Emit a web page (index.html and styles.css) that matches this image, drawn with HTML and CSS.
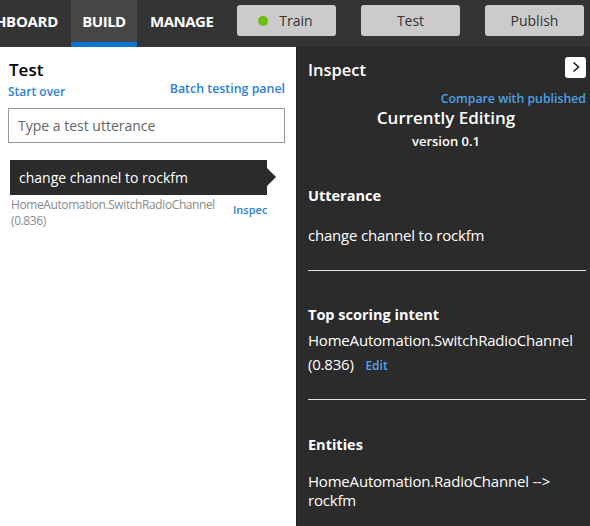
FILE: index.html
```html
<!DOCTYPE html>
<html>
<head>
<meta charset="utf-8">
<link rel="stylesheet" href="styles.css">
</head>
<body>
<div class="topbar">
  <div class="tabs">
    <div class="tab tab-first"><span>DASHBOARD</span></div>
    <div class="tab tab-active">BUILD</div>
    <div class="tab tab-manage">MANAGE</div>
  </div>
  <div class="actions">
    <button class="btn btn-train"><span class="dot"></span>Train</button>
    <button class="btn">Test</button>
    <button class="btn">Publish</button>
  </div>
</div>
<div class="main">
  <div class="left">
    <div class="test-title">Test</div>
    <div class="test-links">
      <a class="link">Start over</a>
      <a class="link link-batch">Batch testing panel</a>
    </div>
    <div class="input">Type a test utterance</div>
    <div class="bubble">change channel to rockfm</div>
    <div class="result">
      <div class="result-text">HomeAutomation.SwitchRadioChannel<br>(0.836)</div>
      <div class="result-link"><a class="link link-small">Inspect</a></div>
    </div>
  </div>
  <div class="right">
    <div class="inspect-head">
      <div class="inspect-title">Inspect</div>
      <div class="close-btn"><svg width="10" height="12" viewBox="0 0 10 12"><path d="M2.5 1.5 L7.5 6 L2.5 10.5" fill="none" stroke="#222" stroke-width="1.6"/></svg></div>
    </div>
    <div class="compare"><a class="link link-light">Compare with published</a></div>
    <div class="editing">Currently Editing</div>
    <div class="version">version 0.1</div>
    <div class="section section-utt">
      <div class="sec-title">Utterance</div>
      <div class="sec-body sec-utt">change channel to rockfm</div>
    </div>
    <div class="section section-intent">
      <div class="sec-title">Top scoring intent</div>
      <div class="sec-body intent-body">HomeAutomation.SwitchRadioChannel<br>(0.836) <a class="link link-edit">Edit</a></div>
    </div>
    <div class="section section-last">
      <div class="sec-title">Entities</div>
      <div class="sec-body ent-body">HomeAutomation.RadioChannel --&gt;<br>rockfm</div>
    </div>
  </div>
</div>
</body>
</html>
```

FILE: styles.css
```css
html, body {
  margin: 0;
  padding: 0;
  width: 590px;
  height: 526px;
  overflow: hidden;
  font-family: "Open Sans", "Noto Sans", sans-serif;
}
.topbar {
  height: 47px;
  background: #343434;
  display: flex;
  align-items: flex-start;
}
.tabs {
  display: flex;
  height: 47px;
}
.tab {
  height: 42px;
  border-bottom: 5px solid transparent;
  display: flex;
  align-items: center;
  padding: 0 13px;
  color: #fff;
  font-weight: 700;
  font-size: 15px;
  letter-spacing: -0.3px;
  white-space: nowrap;
  box-sizing: content-box;
}
.tab-first {
  width: 58px;
  overflow: hidden;
  justify-content: flex-end;
  padding: 0 13px 0 0;
}
.tab-active {
  background: #464646;
  border-bottom-color: #0a74d2;
  width: 66px;
  justify-content: center;
  padding: 0;
  letter-spacing: -0.5px;
}
.tab-manage {
  width: 76px;
  padding: 0 0 0 13px;
  letter-spacing: -0.5px;
}
.actions {
  display: flex;
  gap: 25px;
  margin-left: 11px;
  padding-top: 5px;
}
.btn {
  width: 99px;
  height: 31px;
  background: #cbcbcb;
  border: none;
  border-radius: 3px;
  font-family: inherit;
  font-size: 14px;
  color: #333;
  display: flex;
  align-items: center;
  justify-content: center;
  padding: 0;
}
.btn-train {
  padding-right: 2px;
}
.dot {
  width: 10px;
  height: 10px;
  border-radius: 50%;
  background: #6fbd10;
  margin-right: 11px;
}
.main {
  display: flex;
  height: 479px;
}
.left {
  width: 297px;
  background: #fff;
  box-sizing: border-box;
  padding: 11px 11px 0 8px;
  border-right: 1px solid #222;
}
.test-title {
  font-size: 17px;
  font-weight: 600;
  color: #000;
  line-height: 24px;
  margin-left: 1px;
}
.test-links {
  display: flex;
  justify-content: space-between;
  align-items: flex-end;
  margin-top: 2px;
}
.link {
  color: #2b7fd9;
  font-weight: 600;
  font-size: 12px;
  letter-spacing: 0;
}
.test-links .link {
  line-height: 16px;
}
.link-batch {
  position: relative;
  top: -3px;
  font-size: 12.4px;
}
.input {
  margin-top: 8px;
  height: 35px;
  border: 1px solid #999;
  box-sizing: border-box;
  padding: 0 9px;
  display: flex;
  align-items: center;
  font-size: 14px;
  color: #666;
}
.bubble {
  margin-top: 17px;
  margin-left: 2px;
  width: 257px;
  height: 35px;
  background: #2b2b2b;
  color: #fff;
  font-size: 14px;
  display: flex;
  align-items: center;
  padding-left: 9px;
  box-sizing: border-box;
  position: relative;
}
.bubble::after {
  content: "";
  position: absolute;
  right: -9px;
  top: 8px;
  border-left: 9px solid #2b2b2b;
  border-top: 9px solid transparent;
  border-bottom: 9px solid transparent;
}
.result {
  display: flex;
  margin-left: 3px;
  margin-top: 2px;
}
.result-text {
  font-size: 12px;
  color: #8a8a8a;
  line-height: 16px;
  letter-spacing: -0.4px;
  width: 222px;
}
.result-link {
  width: 34px;
  overflow: hidden;
  white-space: nowrap;
  padding-top: 0;
}
.link-small {
  font-size: 11px;
}
.right {
  flex: 1;
  background: #2b2b2b;
  color: #fff;
  padding: 10px 4px 0 11px;
}
.inspect-head {
  display: flex;
  justify-content: space-between;
  align-items: center;
  height: 24px;
}
.inspect-title {
  font-size: 16.5px;
  font-weight: 600;
}
.close-btn {
  width: 21px;
  height: 21px;
  background: #fff;
  border-radius: 3px;
  display: flex;
  align-items: center;
  justify-content: center;
  position: relative;
  top: -2px;
}
.compare {
  text-align: right;
  margin-top: 8px;
  line-height: 16px;
}
.link-light {
  color: #4ea0e4;
  font-size: 12.3px;
}
.editing {
  text-align: center;
  font-size: 17px;
  font-weight: 600;
  line-height: 22px;
  padding-right: 2px;
}
.version {
  text-align: center;
  font-size: 13px;
  font-weight: 600;
  line-height: 20px;
  margin-top: 2px;
  padding-right: 2px;
}
.section {
  border-bottom: 1px solid #e0e0e0;
}
.section-utt {
  padding-top: 35px;
}
.sec-title {
  font-size: 14.5px;
  font-weight: 700;
  line-height: 20px;
}
.sec-body {
  font-size: 15px;
  line-height: 20px;
  letter-spacing: -0.2px;
}
.sec-utt {
  margin-top: 19px;
  padding-bottom: 25px;
}
.section-intent {
  padding-top: 34px;
}
.intent-body {
  margin-top: 3px;
  line-height: 24px;
  padding-bottom: 21px;
}
.link-edit {
  color: #5aa2e4;
  margin-left: 8px;
  letter-spacing: 0;
}
.section-last {
  border-bottom: none;
  padding-top: 35px;
}
.ent-body {
  margin-top: 17px;
  line-height: 19px;
}
```
